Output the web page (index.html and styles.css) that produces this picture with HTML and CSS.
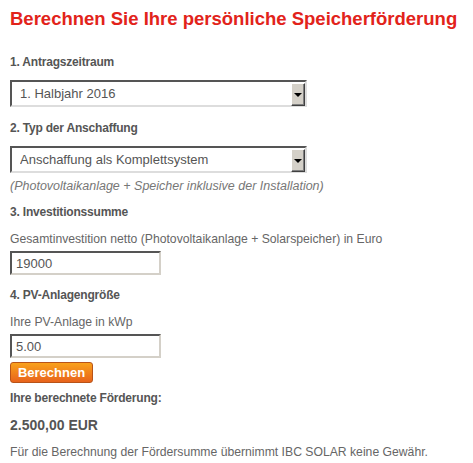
FILE: index.html
```html
<!DOCTYPE html>
<html lang="de">
<head>
  <meta charset="UTF-8">
  <title>Speicherförderung berechnen</title>
  <link rel="stylesheet" href="styles.css">
</head>
<body>

<h1 class="title">Berechnen Sie Ihre persönliche Speicherförderung</h1>

<form class="calc" onsubmit="return false">
  <div class="label">1. Antragszeitraum</div>
  <div class="select-wrap">
    <select class="select">
      <option>1. Halbjahr 2016</option>
      <option>2. Halbjahr 2016</option>
    </select>
    <span class="arrow"></span>
  </div>

  <div class="label">2. Typ der Anschaffung</div>
  <div class="select-wrap">
    <select class="select">
      <option>Anschaffung als Komplettsystem</option>
      <option>Nachrüstung eines Speichers</option>
    </select>
    <span class="arrow"></span>
  </div>
  <div class="hint">(Photovoltaikanlage + Speicher inklusive der Installation)</div>

  <div class="label">3. Investitionssumme</div>
  <div class="text">Gesamtinvestition netto (Photovoltaikanlage + Solarspeicher) in Euro</div>
  <input class="input" type="text" value="19000">

  <div class="label">4. PV-Anlagengröße</div>
  <div class="text">Ihre PV-Anlage in kWp</div>
  <input class="input" type="text" value="5.00">

  <button class="btn" type="submit">Berechnen</button>

  <div class="label result-label">Ihre berechnete Förderung:</div>
  <div class="result">2.500,00 EUR</div>
  <div class="text disclaimer">Für die Berechnung der Fördersumme übernimmt IBC SOLAR keine Gewähr.</div>
</form>

</body>
</html>
```

FILE: styles.css
```css
body {
  margin: 0;
  padding: 0 10px;
  background: #fff;
  font-family: "Liberation Sans", Arial, sans-serif;
  font-size: 12.2px;
  color: #666;
}
.title {
  margin: 8px 0 0;
  font-size: 18.5px;
  line-height: 22px;
  font-weight: bold;
  color: #e2231a;
  white-space: nowrap;
}
.calc {
  display: flex;
  flex-direction: column;
  align-items: flex-start;
  margin-top: 24px;
}
.label {
  font-size: 12px;
  font-weight: bold;
  color: #555;
  line-height: 16px;
  letter-spacing: -0.2px;
}
.text {
  line-height: 16px;
  margin-top: 11px;
}
.select-wrap {
  position: relative;
  margin: 10px 0 13px;
}
.select {
  appearance: none;
  -webkit-appearance: none;
  width: 297px;
  height: 27px;
  margin: 0;
  padding: 0 24px 0 8px;
  font-family: "Liberation Sans", Arial, sans-serif;
  font-size: 13px;
  color: #555;
  background: #fff;
  border: 2px solid;
  border-color: #555 #ddd #ddd #555;
  border-radius: 0;
}
.arrow {
  position: absolute;
  top: 3px;
  right: 2px;
  width: 12px;
  height: 21px;
  background: #d4d0c8;
  border: 1px solid;
  border-color: #fff #404040 #404040 #fff;
  box-shadow: inset -1px -1px 0 #808080;
}
.arrow::after {
  content: "";
  position: absolute;
  top: 9px;
  left: 2px;
  border-left: 4px solid transparent;
  border-right: 4px solid transparent;
  border-top: 4px solid #000;
}
.hint {
  font-size: 12.5px;
  font-style: italic;
  color: #777;
  line-height: 16px;
  margin: -8px 0 10px;
}
.input {
  width: 151px;
  height: 24px;
  box-sizing: border-box;
  margin: 4px 0 12px;
  padding: 0 4px;
  font-family: "Liberation Sans", Arial, sans-serif;
  font-size: 13px;
  color: #555;
  border: 2px solid;
  border-color: #555 #d4d0c8 #d4d0c8 #555;
}
.btn {
  margin: -8px 0 0;
  width: 83px;
  height: 21px;
  padding: 0;
  font-family: "Liberation Sans", Arial, sans-serif;
  font-size: 13px;
  font-weight: bold;
  color: #fff;
  background: linear-gradient(#f9a11b, #e8631c);
  border: 1px solid #b85318;
  border-radius: 3px;
}
.result-label {
  margin-top: 7px;
}
.result {
  margin-top: 10px;
  font-size: 14px;
  font-weight: bold;
  color: #555;
  line-height: 18px;
}
.disclaimer {
  margin-top: 10px;
}
```
